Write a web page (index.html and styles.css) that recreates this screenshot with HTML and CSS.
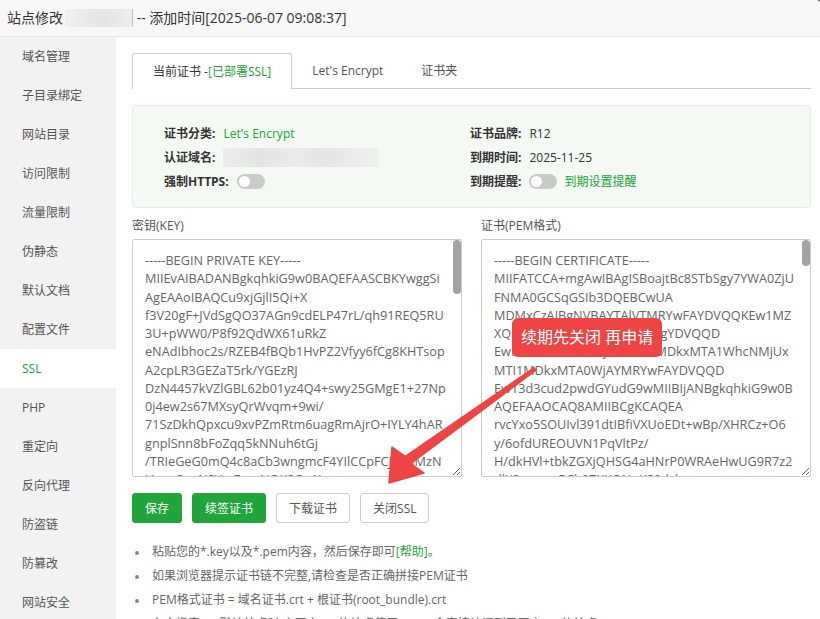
FILE: index.html
```html
<!DOCTYPE html>
<html lang="zh-CN">

<head>
  <meta charset="UTF-8">
  <title>站点修改</title>
  <meta name="viewport" content="width=device-width, initial-scale=1.0">
  <link rel="stylesheet" href="styles.css">
</head>

<body>

  <div class="title-bar">
    站点修改<span class="masked"></span> -- 添加时间[2025-06-07 09:08:37]
  </div>
  <div class="close-dot"></div>

  <div class="layout">
    <ul class="side-menu">
      <li>域名管理</li>
      <li>子目录绑定</li>
      <li>网站目录</li>
      <li>访问限制</li>
      <li>流量限制</li>
      <li>伪静态</li>
      <li>默认文档</li>
      <li>配置文件</li>
      <li class="active">SSL</li>
      <li>PHP</li>
      <li>重定向</li>
      <li>反向代理</li>
      <li>防盗链</li>
      <li>防篡改</li>
      <li>网站安全</li>
    </ul>

    <div class="content">
      <div class="tabs">
        <div class="tab current">当前证书 -<span class="green">[已部署SSL]</span></div>
        <div class="tab">Let's Encrypt</div>
        <div class="tab">证书夹</div>
      </div>

      <div class="cert-info">
        <div class="row"><b>证书分类:</b><span class="green">Let's Encrypt</span></div>
        <div class="row"><b>证书品牌:</b><span>R12</span></div>
        <div class="row"><b>认证域名:</b><span class="masked-domain"></span></div>
        <div class="row"><b>到期时间:</b><span>2025-11-25</span></div>
        <div class="row"><b>强制HTTPS:</b><span class="switch"></span></div>
        <div class="row"><b>到期提醒:</b><span class="switch"></span><span class="green notice">到期设置提醒</span></div>
      </div>

      <div class="pem-boxes">
        <div class="pem-col">
          <label for="keyBox">密钥(KEY)</label>
          <div class="pem-field">
            <textarea id="keyBox" spellcheck="false">
-----BEGIN PRIVATE KEY-----
MIIEvAIBADANBgkqhkiG9w0BAQEFAASCBKYwggSi
AgEAAoIBAQCu9xjGjlI5Qi+X
f3V20gF+JVdSgQO37AGn9cdELP47rL/qh91REQ5RU
3U+pWW0/P8f92QdWX61uRkZ
eNAdIbhoc2s/RZEB4fBQb1HvPZ2Vfyy6fCg8KHTsop
A2cpLR3GEZaT5rk/YGEzRJ
DzN4457kVZlGBL62b01yz4Q4+swy25GMgE1+27Np
0j4ew2s67MXsyQrWvqm+9wi/
71SzDkhQpxcu9xvPZmRtm6uagRmAjrO+IYLY4hAR
gnplSnn8bFoZqq5kNNuh6tGj
/TRIeGeG0mQ4c8aCb3wngmcF4YIlCCpFCJjmqMzN
Uqqg3oxNSYt+FovzNOK2Ox1j
xW9kRpL3nQ+Tz7cVb0aHs2Ym
-----END PRIVATE KEY-----</textarea>
            <span class="scroll-thumb key-thumb"></span>
          </div>
        </div>
        <div class="pem-col">
          <label for="certBox">证书(PEM格式)</label>
          <div class="pem-field">
            <textarea id="certBox" spellcheck="false">
-----BEGIN CERTIFICATE-----
MIIFATCCA+mgAwIBAgISBoajtBc8STbSgy7YWA0ZjU
FNMA0GCSqGSIb3DQEBCwUA
MDMxCzAJBgNVBAYTAlVTMRYwFAYDVQQKEw1MZ
XQncyBFbmNyeXB0MQwwCgYDVQQD
EwNSMTIwHhcNMjUwODI3MDkxMTA1WhcNMjUx
MTI1MDkxMTA0WjAYMRYwFAYDVQQD
Ew13d3cud2pwdGYudG9wMIIBIjANBgkqhkiG9w0B
AQEFAAOCAQ8AMIIBCgKCAQEA
rvcYxo5SOUIvl391dtIBfiVXUoEDt+wBp/XHRCz+O6
y/6ofdUREOUVN1PqVltPz/
H/dkHVl+tbkZGXjQHSG4aHNrP0WRAeHwUG9R7z2
dlX8cunweRCh07KKONnKS0dyb
-----END CERTIFICATE-----</textarea>
            <span class="scroll-thumb cert-thumb"></span>
          </div>
        </div>
      </div>

      <div class="actions">
        <button class="btn btn-green">保存</button>
        <button class="btn btn-green">续签证书</button>
        <button class="btn">下载证书</button>
        <button class="btn">关闭SSL</button>
      </div>

      <ul class="tips">
        <li>粘贴您的*.key以及*.pem内容，然后保存即可<span class="green">[帮助]</span>。</li>
        <li>如果浏览器提示证书链不完整,请检查是否正确拼接PEM证书</li>
        <li>PEM格式证书 = 域名证书.crt + 根证书(root_bundle).crt</li>
        <li>在未指定SSL默认站点时,未开启SSL的站点使用HTTPS会直接访问到已开启SSL的站点</li>
      </ul>
    </div>
  </div>

  <!-- annotation drawn over the screenshot -->
  <div class="callout">续期先关闭 再申请</div>
  <svg class="arrow" width="820" height="619" viewBox="0 0 820 619">
    <polygon points="389,483 424,473 410.7,463.6 535.9,370.2 534.1,367.8 405.3,456.4 392,447"
      fill="#ef4444" stroke="#ef4444" stroke-width="1.5" stroke-linejoin="round" />
  </svg>

</body>

</html>
```

FILE: styles.css
```css
* {
  box-sizing: border-box;
  margin: 0;
  padding: 0;
}

html,
body {
  height: 100%;
  overflow: hidden;
}

body {
  font-family: 'Open Sans', 'Noto Sans CJK SC', sans-serif;
  font-size: 12px;
  color: #333;
  background: white;
}

.green {
  color: #20a53a;
}

.title-bar {
  height: 37px;
  line-height: 36px;
  padding-left: 7px;
  font-size: 14px;
  color: #333;
  background: #f7f7f7;
  border-bottom: 1px solid #e6e6e6;
}

.masked {
  display: inline-block;
  width: 68px;
  height: 18px;
  vertical-align: -4px;
  margin-left: 2px;
  border-right: 1px solid #a9c8e6;
  background: linear-gradient(90deg, #f1f1f1 0, #e9e9e9 30%, #e4e4e4 60%, #ededed 100%);
}

.close-dot {
  position: absolute;
  top: -15px;
  right: -13px;
  width: 18px;
  height: 18px;
  border-radius: 50%;
  background: #666;
}

.layout {
  display: flex;
  height: calc(100% - 37px);
}

.side-menu {
  list-style: none;
  width: 116px;
  flex-shrink: 0;
  background: #f2f2f2;
}

.side-menu li {
  height: 39px;
  line-height: 39px;
  padding-left: 22px;
  color: #555;
}

.side-menu li.active {
  background: white;
  color: #20a53a;
}

.content {
  flex: 1;
  padding: 16px 9px 0 16px;
}

.tabs {
  display: flex;
  height: 36px;
  border-bottom: 1px solid #ccc;
}

.tab {
  height: 35px;
  line-height: 35px;
  padding: 0 20px;
  color: #555;
}

.tab.current {
  height: 36px;
  color: #333;
  background: white;
  border: 1px solid #ccc;
  border-bottom: none;
  border-radius: 2px 2px 0 0;
}

.tab + .tab {
  padding: 0 18px 0 20px;
}

.cert-info {
  display: grid;
  grid-template-columns: 306px 1fr;
  margin-top: 16px;
  padding: 15px 0 14px 31px;
  background: #f4f9f3;
  border: 1px solid #e4eee2;
  border-radius: 4px;
}

.cert-info .row {
  display: flex;
  align-items: center;
  height: 24px;
  color: #333;
}

.cert-info b {
  margin-right: 8px;
  font-weight: bold;
}

.masked-domain {
  width: 156px;
  height: 19px;
  background: linear-gradient(90deg, #ececec 0, #e4e4e4 25%, #eaeaea 45%, #e5e5e5 65%, #f0f0f0 100%);
}

.switch {
  position: relative;
  display: inline-block;
  width: 28px;
  height: 15px;
  border-radius: 8px;
  background: #cacaca;
}

.switch::after {
  content: "";
  position: absolute;
  top: 2px;
  left: 2px;
  width: 11px;
  height: 11px;
  border-radius: 50%;
  background: white;
}

.cert-info .notice {
  margin-left: 7px;
}

.pem-boxes {
  display: flex;
  gap: 19px;
  margin-top: 8px;
}

.pem-col {
  flex: 1;
}

.pem-col label {
  display: block;
  line-height: 20px;
  margin-bottom: 3px;
  color: #555;
}

.pem-field {
  position: relative;
}

.pem-field textarea {
  display: block;
  width: 100%;
  height: 238px;
  padding: 11px 12px 0;
  font-family: 'Open Sans', sans-serif;
  font-size: 12.7px;
  line-height: 18.25px;
  color: #666;
  border: 1px solid #ccc;
  border-radius: 2px;
  white-space: pre;
  overflow: hidden;
  outline: none;
}

/* headless view has no native scroll bars, so the thumb is drawn */
.scroll-thumb {
  position: absolute;
  top: 1px;
  right: 1px;
  width: 8px;
  border-radius: 4px;
  background: #a3a3a3;
}

.key-thumb {
  height: 54px;
}

.cert-thumb {
  height: 26px;
}

.actions {
  display: flex;
  gap: 10px;
  margin-top: 16px;
}

.btn {
  height: 30px;
  padding: 0 12px;
  font-family: inherit;
  font-size: 12px;
  color: #555;
  background: white;
  border: 1px solid #ccc;
  border-radius: 3px;
}

.btn-green {
  color: white;
  background: #20a53a;
  border-color: #20a53a;
}

.tips {
  list-style: none;
  margin-top: 17px;
  padding-left: 3px;
  color: #666;
}

.tips li {
  line-height: 24px;
  white-space: nowrap;
}

.tips li::before {
  content: "";
  display: inline-block;
  width: 4px;
  height: 4px;
  margin-right: 13px;
  vertical-align: middle;
  border-radius: 50%;
  background: #888;
}

.callout {
  position: absolute;
  left: 512px;
  top: 318px;
  width: 150px;
  height: 39px;
  line-height: 39px;
  padding-left: 9px;
  font-size: 16px;
  color: white;
  background: #ef4444;
  border-radius: 6px;
  white-space: nowrap;
}

.arrow {
  position: absolute;
  left: 0;
  top: 0;
  pointer-events: none;
}
```
